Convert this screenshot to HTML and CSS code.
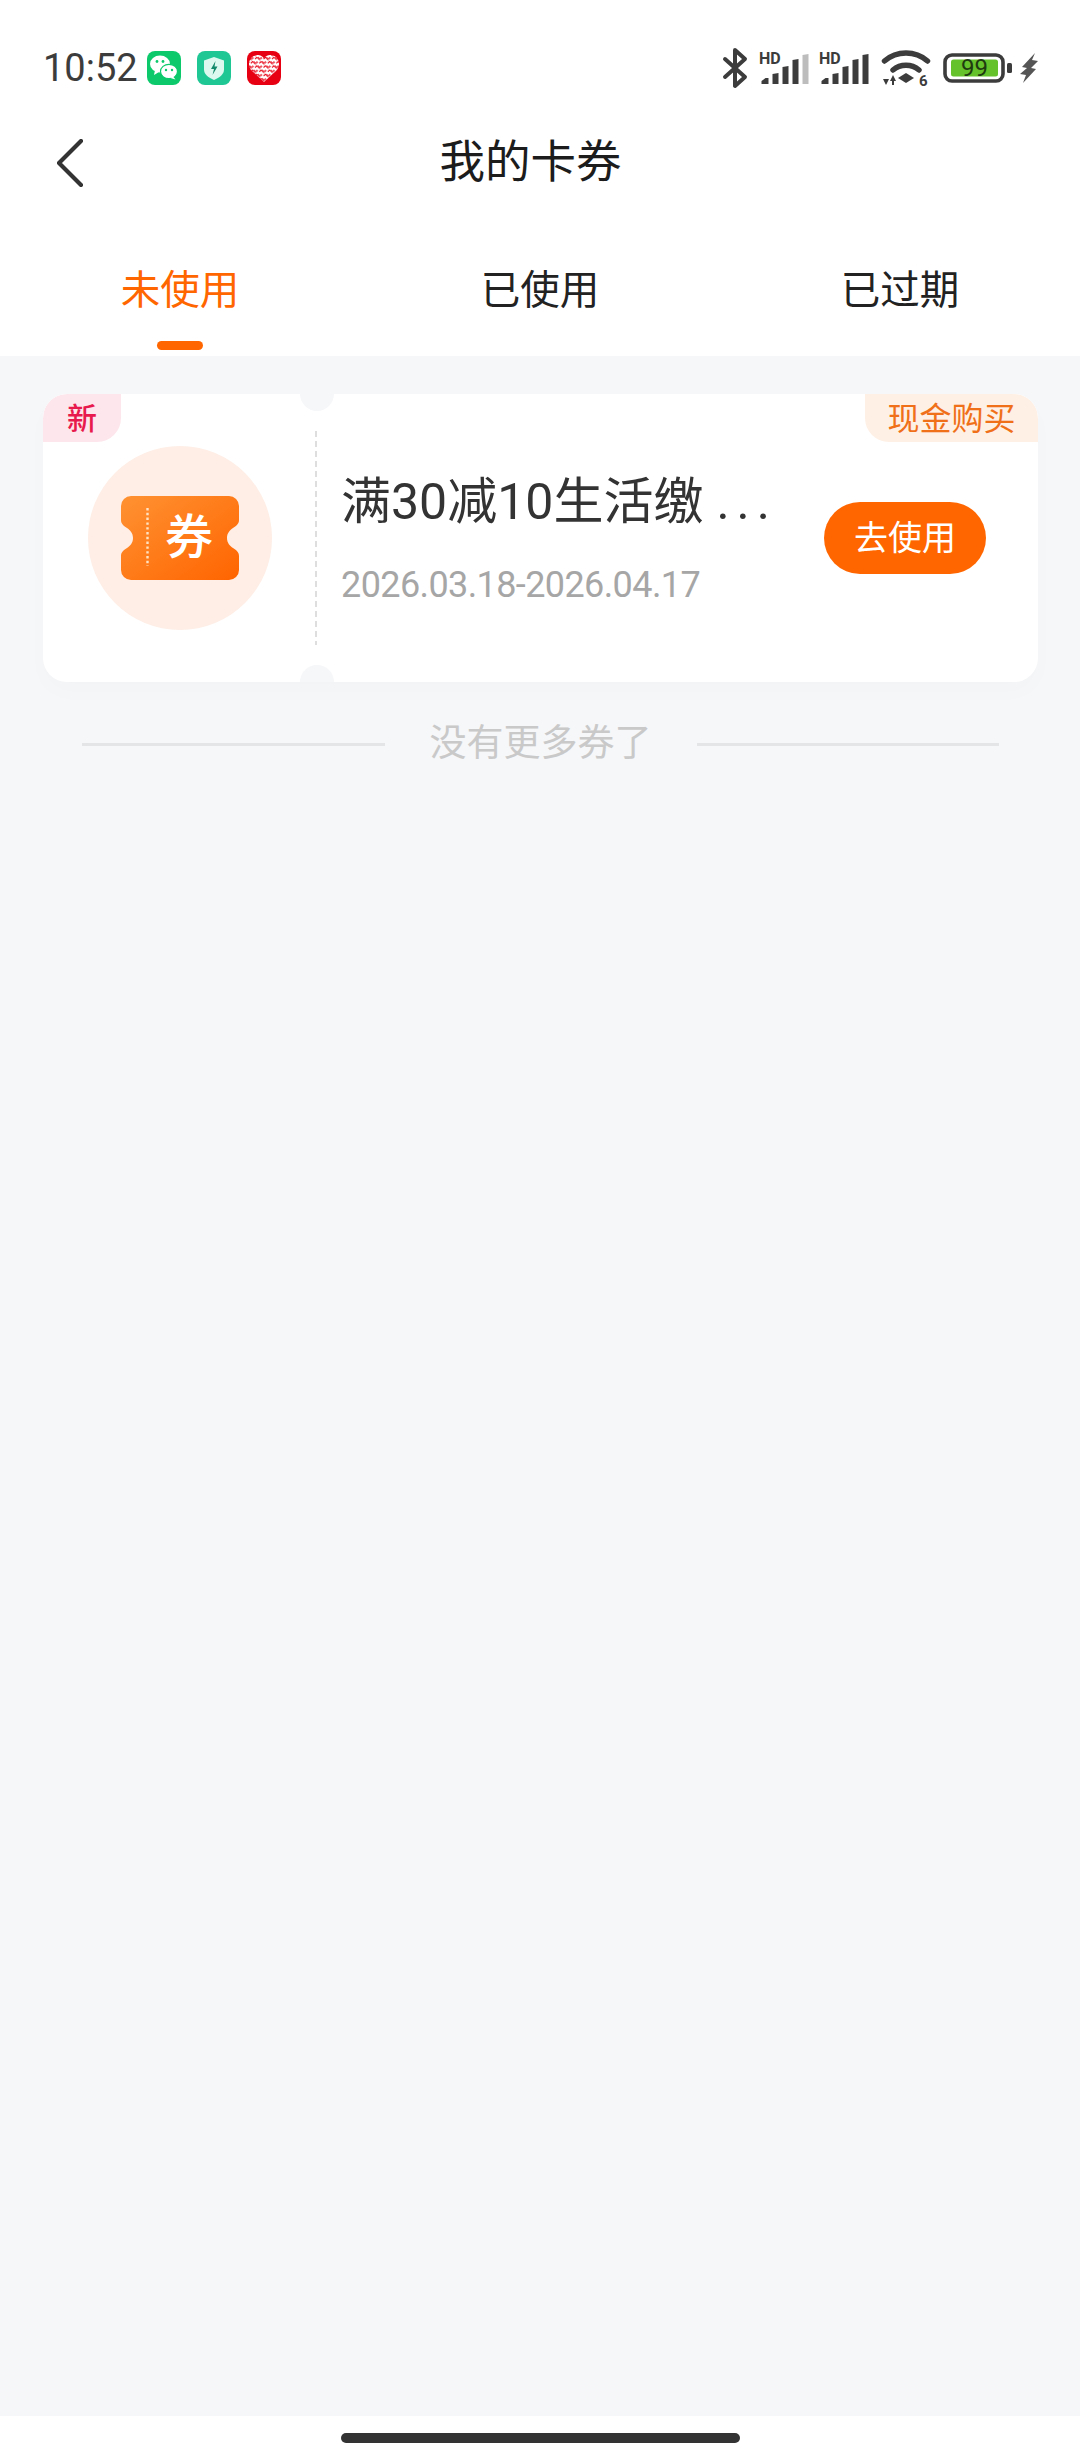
FILE: index.html
```html
<!DOCTYPE html>
<html lang="zh-CN">
<head>
<meta charset="utf-8">
<title>我的卡券</title>
<link rel="stylesheet" href="styles.css">
</head>
<body>
<div class="page">
  <header class="status">
    <span class="time">10:52</span>
    <div class="apps">
      <svg class="app" viewBox="0 0 34 34"><rect width="34" height="34" rx="8" fill="#0CC96C"/><ellipse cx="13" cy="13" rx="10" ry="8.500" fill="#fff"/><path d="M8 19l-1 5 5-3z" fill="#fff"/><ellipse cx="22" cy="20.500" rx="8.500" ry="7.200" fill="#fff" stroke="#0CC96C" stroke-width="1.200"/><path d="M26 25.500l2.500 3-5-1.500z" fill="#fff"/><circle cx="10" cy="10.500" r="1.400" fill="#0CC96C"/><circle cx="16" cy="10.500" r="1.400" fill="#0CC96C"/><circle cx="19" cy="19" r="1.200" fill="#0CC96C"/><circle cx="25" cy="19" r="1.200" fill="#0CC96C"/></svg>
      <svg class="app" viewBox="0 0 34 34"><rect width="34" height="34" rx="8" fill="#1FC795"/><path d="M17 6l10 3.500v9c0 5-4.500 8-10 10.500-5.500-2.500-10-5.500-10-10.500v-9z" fill="#DDF8EF"/><path d="M18.500 10l-4.500 8h3l-1.500 6 5-8.500h-3z" fill="#12896A"/></svg>
      <svg class="app" viewBox="0 0 34 34"><defs><pattern id="weave" width="6" height="6" patternUnits="userSpaceOnUse" patternTransform="rotate(45)"><rect width="6" height="6" fill="#fff"/><path d="M0 3h3.500M3 0v2M5.500 3v3" stroke="#E60012" stroke-width="1.300"/></pattern></defs><rect width="34" height="34" rx="8" fill="#E60012"/><path d="M17 31L4 19C0 14 2 5 10 4c3-.4 5.500 1 7 3.500C18.500 5 21 3.600 24 4c8 1 10 10 6 15z" fill="url(#weave)"/></svg>
    </div>
    <div class="sys">
      <svg class="i-bt" viewBox="0 0 24 40"><path d="M2 11l20 18-10 9V2l10 9L2 29" fill="none" stroke="#3C3C3C" stroke-width="4" stroke-linejoin="round" stroke-linecap="round"/></svg>
      <svg class="i-sig" viewBox="0 0 50 32"><text x="0" y="12" class="hd">HD</text><path d="M2.500 32v-3l4-3h3v6zM13.500 32V22l6-1v11zM23.500 32V15l6-1v18zM33.500 32V8l6-1v25z" fill="#3C3C3C"/><path d="M43.500 32V3l6-1v30z" fill="#BDBDBD"/></svg>
      <svg class="i-sig" viewBox="0 0 50 32"><text x="0" y="12" class="hd">HD</text><path d="M2.500 32v-3l4-3h3v6zM13.500 32V22l6-1v11zM23.500 32V15l6-1v18zM33.500 32V8l6-1v25zM43.500 32V3l6-1v30z" fill="#3C3C3C"/></svg>
      <svg class="i-wifi" viewBox="0 0 48 36"><path d="M2.500 11A33 33 0 0 1 45.500 11M11 20A20 20 0 0 1 37 20" fill="none" stroke="#3C3C3C" stroke-width="5.500" stroke-linecap="round"/><path d="M16 28l8-5 8 5-8 5z" fill="#3C3C3C"/><path d="M1 29h6l-3 6zM8 31l3-6 3 6h-2v4h-2v-4z" fill="#3C3C3C"/><text x="37" y="36" class="six">6</text></svg>
      <svg class="i-bat" viewBox="0 0 70 30"><rect x="2" y="2" width="58" height="26" rx="7" fill="none" stroke="#3C3C3C" stroke-width="3.600"/><rect x="8" y="6.500" width="47" height="17" rx="2.500" fill="#65C22A"/><text x="31.500" y="23" class="pct">99</text><rect x="64" y="10" width="5" height="10" rx="1.500" fill="#3C3C3C"/></svg>
      <svg class="i-bolt" viewBox="0 0 18 30"><path d="M15 0L2 14l5 1-7 6 6 1-3 8 13-14-5-1 7-7-6-1z" fill="#555"/></svg>
    </div>
  </header>

  <nav class="nav">
    <svg class="back" viewBox="0 0 26 48"><path d="M24 2L2 24l22 22" fill="none" stroke="#333" stroke-width="4.200" stroke-linecap="round" stroke-linejoin="round"/></svg>
    <h1 class="nav-title">我的卡券</h1>
  </nav>

  <div class="tabs">
    <div class="tab is-active"><span class="tab-label">未使用</span><i class="tab-bar"></i></div>
    <div class="tab"><span class="tab-label">已使用</span><i class="tab-bar"></i></div>
    <div class="tab"><span class="tab-label">已过期</span><i class="tab-bar"></i></div>
  </div>

  <main class="main">
    <article class="card">
      <span class="tag-new">新</span>
      <span class="tag-type">现金购买</span>
      <i class="notch notch-top"></i>
      <i class="notch notch-bottom"></i>
      <div class="card-left">
        <div class="circle">
          <div class="ticket">
            <svg class="ticket-bg" viewBox="0 0 118 84"><defs><linearGradient id="tk" x1="0" y1="0" x2="1" y2="1"><stop offset="0" stop-color="#FF9232"/><stop offset="1" stop-color="#FF6400"/></linearGradient></defs><path d="M10 0H108a10 10 0 0 1 10 10V24c0 4-3 6-6 8-3 2-6 5-6 10s3 8 6 10c3 2 6 4 6 8V74a10 10 0 0 1-10 10H10A10 10 0 0 1 0 74V60c0-4 3-6 6-8 3-2 6-5 6-10s-3-8-6-10c-3-2-6-4-6-8V10A10 10 0 0 1 10 0z" fill="url(#tk)"/><path d="M26.500 12V70" stroke="#FFE3C2" stroke-width="2.400" stroke-dasharray="2.400 2.400"/></svg>
            <span class="ticket-text">券</span>
          </div>
        </div>
      </div>
      <i class="divider"></i>
      <div class="info">
        <div class="info-title">满30减10生活缴<span class="dots">...</span></div>
        <div class="info-date">2026.03.18-2026.04.17</div>
      </div>
      <button class="use-btn">去使用</button>
    </article>
    <div class="end">
      <i class="end-line"></i>
      <span class="end-text">没有更多券了</span>
      <i class="end-line"></i>
    </div>
  </main>

  <footer class="home"><i class="home-bar"></i></footer>
</div>
</body>
</html>
```
FILE: styles.css
```css
* { box-sizing: border-box; margin: 0; padding: 0; }
html, body { width: 1080px; height: 2460px; background: #fff; }
body { font-family: Roboto, "Noto Sans CJK SC", sans-serif; color: #333; overflow: hidden; }
i { display: block; }
.page { height: 2460px; display: flex; flex-direction: column; }

.status { height: 137px; display: flex; align-items: center; padding: 0 42px 1px 43px; flex: none; }
.time { font-size: 38px; line-height: 44px; color: #3C3C3C; width: 94px; }
.apps { display: flex; gap: 16px; margin-left: 10px; }
.app { width: 34px; height: 34px; display: block; }
.sys { margin-left: auto; display: flex; align-items: center; }
.sys svg { display: block; flex: none; overflow: visible; }
.i-bt { width: 24px; height: 40px; }
.i-sig { width: 50px; height: 32px; margin-left: 12px; }
.i-sig + .i-sig { margin-left: 10px; }
.i-wifi { width: 48px; height: 36px; margin-left: 13px; }
.i-bat { width: 70px; height: 30px; margin-left: 13px; }
.i-bolt { width: 18px; height: 30px; margin-left: 7px; }
.hd { font: 700 16px Roboto, sans-serif; fill: #3C3C3C; }
.six { font: 700 15px Roboto, sans-serif; fill: #3C3C3C; }
.pct { font: 400 24px Roboto, sans-serif; fill: #1F3A10; text-anchor: middle; }

.nav { height: 52px; flex: none; display: flex; align-items: center; padding: 0 102px 0 57px; }
.back { width: 26px; height: 48px; flex: none; }
.nav-title { flex: 1; text-align: center; font-size: 45.5px; font-weight: 400; line-height: 52px; color: #1c1c1c; }

.tabs { flex: none; height: 167px; padding-top: 77px; display: grid; grid-template-columns: repeat(3, 1fr); }
.tab { display: flex; flex-direction: column; align-items: center; }
.tab-label { font-size: 39.5px; line-height: 50px; color: #222; }
.tab-bar { width: 46px; height: 9px; margin-top: 25px; border-radius: 5px; }
.is-active .tab-label { color: #FF6600; }
.is-active .tab-bar { background: #FF6600; }

.main { flex: 1; background: #F6F7F9; padding: 38px 42px 0 43px; }
.card { position: relative; height: 288px; background: #fff; border-radius: 24px; display: flex; align-items: center; box-shadow: 0 10px 24px rgba(0, 0, 0, .015); overflow: hidden; }
.tag-new { position: absolute; left: 0; top: 0; width: 78px; height: 48px; background: #FDE6EC; color: #E8194C; font-size: 30px; font-weight: 500; line-height: 50px; text-align: center; border-radius: 24px 0 24px 0; }
.tag-type { position: absolute; right: 0; top: 0; width: 173px; height: 48px; background: #FEF0E5; color: #F0701A; font-size: 32px; line-height: 50px; text-align: center; border-radius: 0 24px 0 24px; }
.notch { position: absolute; left: 257px; width: 34px; height: 34px; border-radius: 50%; background: #F6F7F9; }
.notch-top { top: -17px; }
.notch-bottom { bottom: -17px; }

.card-left { width: 272px; flex: none; display: flex; justify-content: center; padding-left: 2px; }
.circle { width: 184px; height: 184px; border-radius: 50%; background: #FEEEE6; display: flex; align-items: center; justify-content: center; }
.ticket { position: relative; width: 118px; height: 84px; display: flex; align-items: center; padding-left: 44px; }
.ticket-bg { position: absolute; left: 0; top: 0; width: 118px; height: 84px; display: block; }
.ticket-text { position: relative; font-size: 48px; font-weight: 500; line-height: 84px; color: #fff; }

.divider { flex: none; width: 2px; height: 214px; background: repeating-linear-gradient(to bottom, #DEDEDE 0 6px, transparent 6px 10px); }
.info { flex: 1; min-width: 0; padding-left: 24px; }
.info-title { font-size: 50px; line-height: 60px; color: #333; white-space: nowrap; }
.dots { letter-spacing: 7px; margin-left: 13px; }
.info-date { font-size: 36px; letter-spacing: -.6px; line-height: 50px; margin-top: 28px; margin-bottom: -6px; color: #A6A6A6; white-space: nowrap; }
.use-btn { flex: none; width: 162px; height: 72px; margin-right: 52px; border: 0; border-radius: 36px; background: #FF6600; color: #fff; font: 400 34px/72px Roboto, "Noto Sans CJK SC", sans-serif; }

.end { display: flex; align-items: center; gap: 45px; margin: 38px 39px 0; height: 48px; }
.end-line { flex: 1; height: 3px; background: #E4E5E7; }
.end-text { font-size: 37px; line-height: 48px; color: #C9C9C9; white-space: nowrap; }

.home { flex: none; height: 44px; background: #fff; padding-top: 17px; display: flex; justify-content: center; }
.home-bar { width: 399px; height: 10px; border-radius: 5px; background: #333; }
```
